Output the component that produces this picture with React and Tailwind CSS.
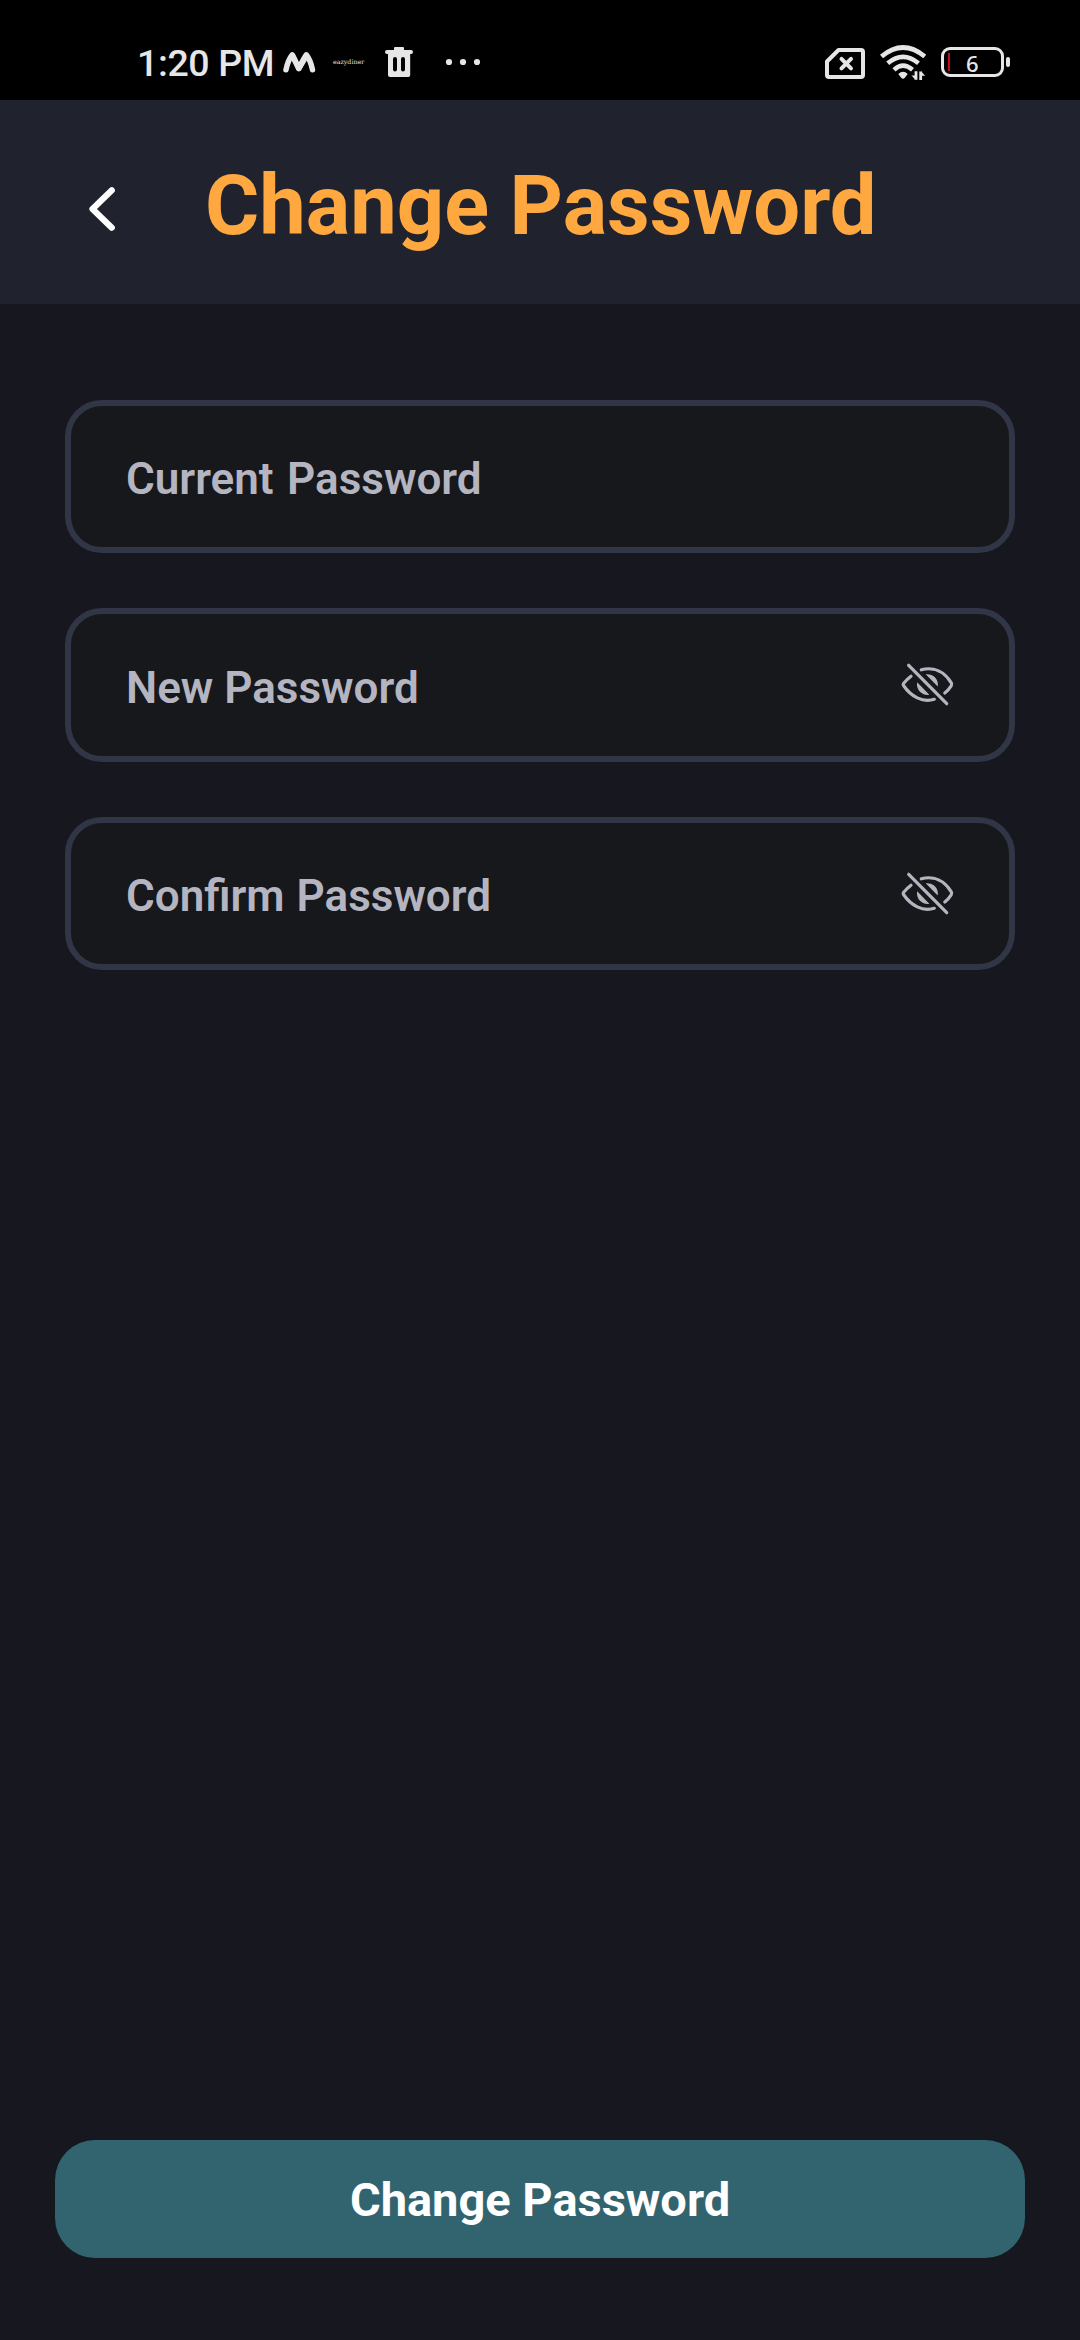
function StatusBar() {
  return (
    <div className="flex h-[100px] items-start bg-black pl-[137px] text-[#e6e6e6]">
      <span className="mt-[41px] w-[145px] whitespace-nowrap text-[37.5px] font-medium leading-[44px] tracking-[-0.4px]">1:20 PM</span>
      <svg className="mt-[50px]" width="34" height="26" viewBox="0 0 34 26" fill="none" stroke="#e6e6e6" strokeLinecap="round" strokeLinejoin="round">
        <path strokeWidth="5.500" d="M4 19.800Q6 10 10.300 4.800Q12 8 16.800 18.500Q22 8 24.300 4.800Q28.500 10 30.500 19.800" />
        <path strokeWidth="5.500" d="M10.800 6.500L16.800 18.500L24 6.500" />
      </svg>
      <span className="ml-[17px] mt-[56px] w-[32px] whitespace-nowrap font-['DejaVu_Serif',serif] text-[6.3px] leading-[12px]">eazydiner</span>
      <svg className="ml-[20px] mt-[47px]" width="28" height="31" viewBox="0 0 28 31">
        <path fill="#e6e6e6" fillRule="evenodd" d="M10 0h8q1 0 1 1v2h7q2 0 2 2t-2 2h-.8v21q0 2-2 2H5q-2 0-2-2V7h-1Q0 7 0 5t2-2h7V1q0-1 1-1ZM10 10q-2 0-2 2v10.500q0 2 2 2t2-2V12q0-2-2-2ZM18 10q-2 0-2 2v10.500q0 2 2 2t2-2V12q0-2-2-2Z" />
      </svg>
      <svg className="ml-[32px] mt-[58px]" width="36" height="8" viewBox="0 0 36 8" fill="#e6e6e6">
        <circle cx="4" cy="4" r="3.1" />
        <circle cx="18" cy="4" r="3.1" />
        <circle cx="32" cy="4" r="3.1" />
      </svg>
      <svg className="ml-[344px] mt-[48px]" width="40" height="31" viewBox="0 0 40 31" fill="none" stroke="#e6e6e6" strokeLinejoin="round">
        <path strokeWidth="4" d="M13.500 2H36q2 0 2 2v23q0 2-2 2H4q-2 0-2-2V13.500Z" />
        <path strokeWidth="4" strokeLinecap="round" d="M16.500 10.800l9.500 9.500M26 10.800l-9.500 9.500" />
      </svg>
      <svg className="ml-[15px] mt-[45px]" width="46" height="36" viewBox="0 0 46 36" fill="none" stroke="#e6e6e6">
        <path strokeWidth="4.800" d="M1.500 11.500Q23-6.500 44.800 11.500" />
        <path strokeWidth="4.500" d="M7.700 18.300Q23 5.500 38.500 18.300" />
        <path strokeWidth="4.500" d="M14 24.800Q23 16.500 32.500 24.800" />
        <path fill="#e6e6e6" stroke="none" d="M18.300 29Q23 24.500 27.700 29L25 32.500Q23 35 21 32.500Z" />
        <path strokeWidth="2.800" d="M36 26.300v8.500M40.700 35v-8.500" />
        <path fill="#e6e6e6" stroke="none" d="M31.500 30.500h4v4.300ZM41 26.300v4.500h4.200Z" />
      </svg>
      <div className="ml-[15px] mt-[47px] flex h-[30px] w-[63px] items-center rounded-[9px] border-[3px] border-[#e6e6e6]">
        <i className="ml-[4px] h-[18px] w-[2px] shrink-0 bg-[#c20d13]" />
        <span className="ml-[16px] mt-[1px] font-['Noto_Sans'] text-[22px] font-medium leading-[24px]">6</span>
      </div>
      <i className="ml-[2px] mt-[57px] h-[10px] w-[4px] rounded-[2px] bg-[#e6e6e6]" />
    </div>
  );
}

function EyeOff() {
  return (
    <svg className="-mt-px" width="56" height="48" viewBox="0 0 56 48" fill="none" stroke="#b4b5c0" strokeWidth="3.200" strokeLinecap="round" strokeLinejoin="round">
      <path d="M8.700 5.300L46.700 43.700" />
      <path d="M21.300 9.800C34 6.500 44.500 12 51.300 22.800Q52.200 24.300 51.200 25.800Q48.500 30 44.800 33" />
      <path d="M11 16.300Q7 19.300 3.500 23.500Q2.800 24.500 3.500 25.500C11 36.500 22.500 42.800 34.300 39.300" />
      <path fill="#b4b5c0" stroke="none" d="M25.700 14.300A10.400 10.400 0 0 1 37.700 26.500ZM17.200 22.300A10.400 10.400 0 0 0 29.300 34.700Z" />
    </svg>
  );
}

function Field({ label, spacing = "", hidden }) {
  return (
    <div className="flex h-[153.300px] items-center justify-between rounded-[37px] border-[6px] border-[#303646] bg-[#17181b] pl-[55px] pr-[53px]">
      <span className={`mt-[5.500px] text-[44px] font-semibold leading-[52px] text-[#b4b5c0] ${spacing}`}>{label}</span>
      {hidden && <EyeOff />}
    </div>
  );
}

export default function App() {
  return (
    <div className="flex h-[2340px] w-[1080px] flex-col overflow-hidden bg-[#17171f] font-['Roboto',sans-serif]">
      <StatusBar />
      <header className="flex h-[204px] items-start bg-[#20222e]">
        <svg className="ml-[87px] mt-[85px]" width="30" height="48" viewBox="0 0 30 48" fill="none" stroke="#fff" strokeWidth="6.200" strokeLinecap="round" strokeLinejoin="round">
          <path d="M24.800 5.300L5.500 24L24.800 42.700" />
        </svg>
        <h1 className="ml-[88px] mt-[57px] whitespace-nowrap text-[83px] font-bold leading-[98px] text-[#ffa840]">Change Password</h1>
      </header>
      <main className="flex flex-1 flex-col gap-[55px] px-[65px] pt-[96px]">
        <Field label="Current Password" spacing="[word-spacing:2.500px]" />
        <Field label="New Password" hidden />
        <Field label="Confirm Password" spacing="[word-spacing:1px]" hidden />
      </main>
      <footer className="px-[55px] pb-[82px]">
        <button className="h-[118px] w-full rounded-[40px] bg-[#326470] pt-[3px] text-[47px] font-bold text-white">Change Password</button>
      </footer>
    </div>
  );
}
